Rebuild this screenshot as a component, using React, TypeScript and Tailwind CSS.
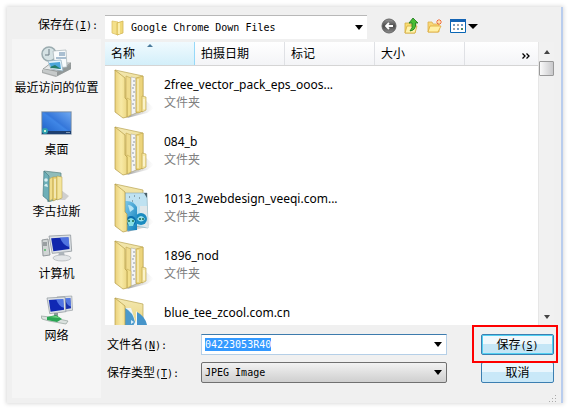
import { useEffect, useRef } from "react";
import type { ReactNode } from "react";

const mono = "font-['DejaVu_Sans_Mono','Noto_Sans_CJK_SC',monospace]";

function Caret() {
  return (
    <svg viewBox="0 0 8 5" className="h-[5px] w-2" aria-hidden="true">
      <path d="M0 0h8L4 5z" fill="#000" />
    </svg>
  );
}

function FolderShell({ children }: { children?: ReactNode }) {
  return (
    <svg viewBox="0 0 40 50" className="h-[50px] w-10 shrink-0" aria-hidden="true">
      <defs>
        <linearGradient id="cover" x1="0" x2="1">
          <stop offset="0" stopColor="#ead07a" />
          <stop offset="0.5" stopColor="#f8eaa6" />
          <stop offset="1" stopColor="#edd884" />
        </linearGradient>
        <linearGradient id="back" x1="0" x2="0" y1="0" y2="1">
          <stop offset="0" stopColor="#f3e8b0" />
          <stop offset="1" stopColor="#e3c765" />
        </linearGradient>
        <linearGradient id="shade" x1="0" x2="1">
          <stop offset="0" stopColor="#666" stopOpacity="0.65" />
          <stop offset="1" stopColor="#bbb" stopOpacity="0" />
        </linearGradient>
        <linearGradient id="aqua" x1="0" x2="1" y1="0" y2="1">
          <stop offset="0" stopColor="#7cc8ea" />
          <stop offset="1" stopColor="#0f7fbb" />
        </linearGradient>
      </defs>
      <path d="M29 29l11 10-7 5-20 5z" fill="url(#shade)" />
      <path d="M1 1l28 6v35l-14 4z" fill="url(#back)" stroke="#b9a350" strokeWidth="0.7" />
      {children}
      <path d="M1 1l10 8v20l2 2v17l-4 1-8-6z" fill="url(#cover)" stroke="#b39b48" strokeWidth="0.7" />
    </svg>
  );
}

function FullFolder() {
  return (
    <FolderShell>
      <path d="M12 7l5 2v37l-5 2z" fill="#efdb8c" stroke="#bfa651" strokeWidth="0.6" />
      <path d="M17 8l5 1v35l-5 2z" fill="#f4f5f6" stroke="#a9a694" strokeWidth="0.5" />
      <path d="M19 12h2m-2 4h2m-3 3h2m-1 4h2m-3 4h2m-1 4h2m-3 4h2m-1 4h2" stroke="#8f99a4" strokeWidth="1.2" />
      <path d="M22 9l7-2v35l-5 2-2-1z" fill="#ecd47c" stroke="#b99f45" strokeWidth="0.6" />
      <path d="M24 10v32" stroke="#faf0bd" strokeWidth="1.4" />
      <path d="M28 27l4 1v13l-4 2z" fill="#f7e9a6" stroke="#b99f45" strokeWidth="0.6" />
      <path d="M13 29l4 2v15l-4 2z" fill="#f2de88" stroke="#bfa64f" strokeWidth="0.5" />
      <path d="M30 30v10" stroke="#fffdf0" strokeWidth="1" />
    </FolderShell>
  );
}

function PictureFolder() {
  return (
    <FolderShell>
      <path d="M11 10l22 0 1 35-14-2-9 3z" fill="#bfe2f1" stroke="#86a9b6" strokeWidth="0.6" />
      <path d="M26 23h7l1 22-8-3z" fill="#e1e8ea" />
      <path d="M30 10l3 0v5z" fill="#4b606b" />
      <path d="M15 14h1m4-1h1m4 2h1m-8 3h1" stroke="#52666e" strokeWidth="1.2" />
      <circle cx="27" cy="36" r="6" fill="#1c8cc0" />
      <path d="M23 36q4-6 8 0-4 5-8 0" fill="#9ce0ed" />
      <circle cx="26" cy="36" r="1" fill="#1a6a48" />
      <circle cx="29" cy="36" r="1" fill="#1a6a48" />
      <path d="M11 18q8-1 12 6v23l-12 1z" fill="url(#aqua)" />
      <path d="M14 22q4 0 6 4l-4 3z" fill="#b5e4f5" />
      <circle cx="17" cy="38" r="5" fill="#0a6fae" />
      <path d="M13 38q4-6 8 0l-2 5h-4z" fill="#86dfe4" />
      <circle cx="15" cy="38" r="1" fill="#1a6a48" />
      <circle cx="19" cy="38" r="1" fill="#1a6a48" />
    </FolderShell>
  );
}

function BlueFolder() {
  return (
    <FolderShell>
      <path d="M22 14l11 12v19H22z" fill="#f5f7f8" />
      <path d="M23 15q8 4 10 13l-4 12h-6z" fill="#4694c9" />
      <path d="M11 11h6l5 15v20H11z" fill="#eef5f8" />
      <path d="M11 11q8 4 10 14-3 7-7 13h-3z" fill="#4c9acb" />
      <path d="M17 23l3 2-3 2z" fill="#d9edf8" />
    </FolderShell>
  );
}

function RecentIcon() {
  return (
    <svg viewBox="0 0 32 32" className="h-8 w-8" aria-hidden="true">
      <path d="M1 24l8-6 21-1v6l-15 8-14-4z" fill="#a8acac" />
      <path d="M2 23l8-6 20 0-14 8z" fill="#e6e8e8" stroke="#858b8b" strokeWidth="0.7" />
      <path d="M2 23l14 3v4L2 26z" fill="#c6caca" />
      <path d="M16 26l14-8v5l-14 7z" fill="#929898" />
      <circle cx="8" cy="8" r="7" fill="#d5e2e4" stroke="#9aabaf" strokeWidth="1.5" />
      <path d="M8 3v6H4" fill="none" stroke="#6c7c85" strokeWidth="1" />
      <path d="M12 5l13-1 1 17-12 1z" fill="#f8fbfc" stroke="#a3b0b5" strokeWidth="0.7" />
      <path d="M18 7h6m-6 2h6m-9 3h10" stroke="#5c83a6" strokeWidth="1.2" />
      <path d="M7 15l13-1 2 11-12-2z" fill="#eaf6fd" stroke="#8fadbe" strokeWidth="0.7" />
      <path d="M8 17l11-1 1 7-10-2z" fill="#4ba6db" />
      <path d="M9 21l5-2 6 4-10-1z" fill="#247c67" />
    </svg>
  );
}

function DesktopIcon() {
  return (
    <svg viewBox="0 0 32 32" className="h-8 w-8" aria-hidden="true">
      <defs>
        <linearGradient id="desk" x1="0" x2="1" y1="1" y2="0">
          <stop offset="0" stopColor="#1b5cc4" />
          <stop offset="0.5" stopColor="#3f86e6" />
          <stop offset="0.55" stopColor="#3577da" />
          <stop offset="1" stopColor="#6fa9f2" />
        </linearGradient>
      </defs>
      <path d="M0 3h31v24H0z" fill="#c3ccd4" />
      <path d="M1 4h29v22H1z" fill="url(#desk)" stroke="#71839a" strokeWidth="0.6" />
      <path d="M1 23h29v3H1z" fill="#1d3f70" />
      <circle cx="4" cy="23" r="3" fill="#2fa0ae" />
      <path d="M3 22h2v2H3z" fill="#caf0d8" />
      <path d="M25 24.500h4" stroke="#8095ae" strokeWidth="1" />
    </svg>
  );
}

function UserIcon() {
  return (
    <svg viewBox="0 0 32 32" className="h-8 w-8" aria-hidden="true">
      <path d="M20 20l8 6-4 4H9z" fill="#b6b6b6" opacity="0.6" />
      <path d="M3 1l17 2v25L7 32z" fill="#8fbcbb" stroke="#57817f" strokeWidth="0.7" />
      <path d="M8 9l4-2v22l-4 2z" fill="#f0dd8b" stroke="#b99e48" strokeWidth="0.5" />
      <path d="M12 7l4 0v22l-4 2z" fill="#eed77c" stroke="#ae923b" strokeWidth="0.5" />
      <path d="M16 6l5 1v21l-5 2z" fill="#f4e59c" stroke="#b79c45" strokeWidth="0.5" />
      <path d="M14 9v19" stroke="#f8f7e8" strokeWidth="1" />
      <path d="M3 1l5 5v25l-6-5z" fill="#6dafb8" stroke="#4b7c83" strokeWidth="0.7" />
      <circle cx="5" cy="10" r="1.8" fill="#d9eff1" />
      <path d="M3 16q3-5 4 1z" fill="#d9eff1" />
    </svg>
  );
}

function Screen({ blue }: { blue: string }) {
  return (
    <>
      <path d="M0 1l20-1 1 15-18 2z" fill="#dce1e5" stroke="#8b9298" strokeWidth="0.7" />
      <path d="M2 3l16-1 1 11-15 2z" fill={blue} />
      <path d="M10 2l8 0 1 9q-6-1-9-9z" fill="#658ef2" opacity="0.75" />
    </>
  );
}

function ComputerIcon() {
  return (
    <svg viewBox="0 0 32 32" className="h-8 w-8" aria-hidden="true">
      <path d="M1 8l6-1 2 16-7 1z" fill="#d1d5d5" stroke="#80878a" strokeWidth="0.8" />
      <path d="M2 11h4m-4 2h4" stroke="#62696f" />
      <circle cx="4" cy="18" r="1" fill="#54b767" />
      <g transform="translate(8 3) scale(1.08)">
        <Screen blue="#1026ac" />
      </g>
      <path d="M18 20l5 0 1 5h-7z" fill="#adb5bb" />
      <ellipse cx="21" cy="26" rx="9" ry="3" fill="#e3e6e8" stroke="#a1a7ac" strokeWidth="0.6" />
    </svg>
  );
}

function NetworkIcon() {
  return (
    <svg viewBox="0 0 32 32" className="h-8 w-8" aria-hidden="true">
      <g transform="translate(16 2) scale(.74 .95)">
        <Screen blue="#1930ad" />
      </g>
      <g transform="translate(6 3) scale(.9 .98)">
        <Screen blue="#1028b4" />
      </g>
      <path d="M15 19v5" stroke="#8c979c" strokeWidth="4" />
      <path d="M0 22l9 1 18 4-2 3-17-3-7-2z" fill="#dbe2df" stroke="#94a29c" strokeWidth="0.7" />
      <path d="M6 23l9-2 6 4-5 3-10-2z" fill="#2aa553" />
      <path d="M8 23l7-1 4 2z" fill="#78d486" />
    </svg>
  );
}

const places = [
  { name: "最近访问的位置", icon: <RecentIcon /> },
  { name: "桌面", icon: <DesktopIcon /> },
  { name: "李古拉斯", icon: <UserIcon /> },
  { name: "计算机", icon: <ComputerIcon /> },
  { name: "网络", icon: <NetworkIcon /> },
];

const files = [
  { name: "2free_vector_pack_eps_ooos...", kind: "文件夹", icon: <FullFolder /> },
  { name: "084_b", kind: "文件夹", icon: <FullFolder /> },
  { name: "1013_2webdesign_veeqi.com...", kind: "文件夹", icon: <PictureFolder /> },
  { name: "1896_nod", kind: "文件夹", icon: <FullFolder /> },
  { name: "blue_tee_zcool.com.cn", icon: <BlueFolder /> },
];

function Toolbar() {
  return (
    <div className="flex items-center gap-[7px] pb-[2px] pl-[14px]">
      <button type="button" aria-label="后退" className="w-4">
        <svg viewBox="0 0 16 16" className="size-4">
          <defs>
            <linearGradient id="ball" x1="0" x2="0" y1="0" y2="1">
              <stop offset="0" stopColor="#999" />
              <stop offset="0.5" stopColor="#4b4b4b" />
              <stop offset="1" stopColor="#8e8e8e" />
            </linearGradient>
          </defs>
          <circle cx="8" cy="8" r="7" fill="url(#ball)" stroke="#666" />
          <path d="M12 8H5m3-3L5 8l3 3" fill="none" stroke="#fff" strokeWidth="1.8" />
        </svg>
      </button>
      <button type="button" aria-label="向上一级" className="w-4">
        <svg viewBox="0 0 16 16" className="size-4">
          <path d="M1 5h4l1 1h6l-1 9H1z" fill="#f8dc72" stroke="#d3ad42" strokeWidth="0.8" />
          <path d="M1 15l2-7h10l-2 7z" fill="#fff3ad" stroke="#d5ab3c" strokeWidth="0.8" />
          <path d="M9 0l5 5h-2.500q1 7-5.500 8 3-3 2-8H5z" fill="#49bd35" stroke="#197619" strokeWidth="0.8" />
        </svg>
      </button>
      <button type="button" aria-label="新建文件夹" className="w-4">
        <svg viewBox="0 0 16 16" className="size-4">
          <path d="M1 4h4l1 2h6v8H1z" fill="#f8d778" stroke="#dcb04c" strokeWidth="0.8" />
          <path d="M1 14l2-6h11l-3 6z" fill="#fff0a5" stroke="#dda937" strokeWidth="0.8" />
          <path d="M12 1v6M9 4h6M10 2l4 4m0-4l-4 4" stroke="#f16935" />
          <circle cx="12" cy="4" r="1.3" fill="#ffe4a1" />
        </svg>
      </button>
      <button type="button" aria-label="查看" className="flex items-center gap-[2px]">
        <svg viewBox="0 0 16 14" className="h-[14px] w-4">
          <path d="M.5.5h15v13H.5z" fill="#fff" stroke="#0966b5" />
          <path d="M0 0h16v3H0z" fill="#1464b4" />
          <path d="M3 5h2v2H3zm8 0h2v2h-2zM7 9h2v2H7z" fill="#6f9bc4" />
          <path d="M7 5h2v2H7zM3 9h2v2H3z" fill="#a5a5a5" />
          <path d="M11 9h2v2h-2z" fill="#4a8460" />
        </svg>
        <svg viewBox="0 0 10 5" className="h-[5px] w-[10px]">
          <path d="M0 0h10L5 5z" />
        </svg>
      </button>
    </div>
  );
}

const columnClass =
  "w-[90px] shrink-0 border-r border-[#dfe1e5] bg-linear-to-b from-white to-[#f3f4f7] pl-[6px] text-left";

export default function App() {
  const nameRef = useRef<HTMLInputElement>(null);

  useEffect(() => {
    nameRef.current?.focus();
    nameRef.current?.select();
  }, []);

  return (
    <div className="h-screen overflow-hidden bg-white p-[7px] font-['Noto_Sans','Noto_Sans_CJK_SC',sans-serif] text-xs text-black">
      <main className="flex h-full flex-col border-r-2 border-[#b9cdee] bg-[#f0f0f0] shadow-[0_0_4px_1px_#dcdcdc]">
        <header className="flex h-8 shrink-0 pt-2">
          <label htmlFor="folder" className={`w-[98px] pr-[7px] text-right leading-5 ${mono}`}>
            保存在<span className="text-[10px]">(<u>I</u>):</span>
          </label>
          <div className="grid w-[262px] items-center border-t border-[#b8b8b8] bg-white *:col-start-1 *:row-start-1">
            <select
              id="folder"
              className={`h-full w-full appearance-none bg-transparent pl-[26px] text-[10px] outline-none ${mono}`}
            >
              <option>Google Chrome Down Files</option>
            </select>
            <svg viewBox="0 0 14 16" className="pointer-events-none ml-[6px] h-4 w-[14px]" aria-hidden="true">
              <path d="M1 1l6 1v13l-6-2z" fill="#f4e08a" stroke="#dcc268" strokeWidth="0.8" />
              <path d="M6 3l6-2v12l-6 2z" fill="#f0d978" stroke="#d3b656" strokeWidth="0.8" />
              <path d="M8 3v11" stroke="#fff5bf" strokeWidth="1.5" />
            </svg>
            <span className="pointer-events-none mr-1 justify-self-end">
              <Caret />
            </span>
          </div>
          <Toolbar />
        </header>

        <div className="flex min-h-0 flex-1">
          <nav className="mr-1 mb-[5px] ml-[5px] w-[89px] shrink-0 bg-[#f5f5f5] pt-[3px]">
            {places.map((place) => (
              <button key={place.name} type="button" className="flex h-[62px] w-full flex-col items-center pt-1">
                {place.icon}
                <span className="leading-5 whitespace-nowrap">{place.name}</span>
              </button>
            ))}
          </nav>

          <div className="flex min-w-0 flex-1 flex-col pt-[3px] pr-[7px] pb-5">
            <section className="flex min-h-0 flex-1 bg-white">
              <div className="flex min-w-0 flex-1 flex-col overflow-hidden">
                <div className="flex h-6 shrink-0 border-b border-[#d5d5d5]">
                  <button
                    type="button"
                    className="relative w-[90px] shrink-0 border-r border-[#96d9f9] bg-linear-to-b from-[#f0fafe] to-[#d3effa] pl-[6px] text-left"
                  >
                    名称
                    <svg viewBox="0 0 6 3" className="absolute top-[2px] left-[42px] h-[3px] w-[6px]" aria-hidden="true">
                      <path d="M0 3h6L3 0z" fill="#4a7a9b" />
                    </svg>
                  </button>
                  <button type="button" className={columnClass}>拍摄日期</button>
                  <button type="button" className={columnClass}>标记</button>
                  <button type="button" className={columnClass}>大小</button>
                  <button
                    type="button"
                    aria-label="更多列"
                    className="flex flex-1 items-center justify-end bg-linear-to-b from-white to-[#f3f4f7] pr-2"
                  >
                    <svg viewBox="0 0 8 6" className="mt-1 h-[6px] w-2">
                      <path d="M.5.5L3 3 .5 5.500M4.500.5L7 3 4.500 5.500" fill="none" stroke="#000" strokeWidth="1.3" />
                    </svg>
                  </button>
                </div>
                <ul className="min-h-0 flex-1 overflow-hidden pt-[3px]">
                  {files.map((file) => (
                    <li key={file.name} className="flex h-[57px] pl-[9px]">
                      {file.icon}
                      <div className="pt-[7px] pl-[10px]">
                        <p className="leading-[18px] whitespace-nowrap">{file.name}</p>
                        {file.kind && <p className="leading-[18px] text-[#808080]">{file.kind}</p>}
                      </div>
                    </li>
                  ))}
                </ul>
              </div>
              <div className="flex w-4 shrink-0 flex-col items-center border-l border-[#e6e6e6] bg-[#f1f1f1] pt-2 pb-[6px]">
                <svg viewBox="0 0 6 4" className="h-1 w-[6px]" aria-hidden="true">
                  <path d="M0 4h6L3 0z" fill="#444" />
                </svg>
                <div className="mt-[7px] h-[15px] w-full rounded-[1px] border border-[#999] bg-linear-to-r from-[#fafafa] to-[#c9c9cb]" />
                <svg viewBox="0 0 6 4" className="mt-auto h-1 w-[6px]" aria-hidden="true">
                  <path d="M0 0h6L3 4z" fill="#444" />
                </svg>
              </div>
            </section>

            <form className="flex flex-col gap-[7px] pt-[9px]" onSubmit={(event) => event.preventDefault()}>
              <div className="flex h-[21px] items-center">
                <label htmlFor="filename" className={`w-24 pl-[2px] ${mono}`}>
                  文件名<span className="text-[10px]">(<u>N</u>):</span>
                </label>
                <div className="flex h-full min-w-0 flex-1 items-center border border-[#b5cfe7] border-t-[#3d7bad] bg-white pr-1">
                  <input
                    id="filename"
                    ref={nameRef}
                    defaultValue="04223053R40"
                    className={`min-w-0 flex-1 bg-transparent pl-[3px] text-[10px] outline-none selection:bg-[#3399ff] selection:text-white ${mono}`}
                  />
                  <button type="button" aria-label="文件名列表">
                    <Caret />
                  </button>
                </div>
                <div className="relative ml-[34px] h-full w-[73px]">
                  <button
                    type="submit"
                    className={`h-full w-full rounded-[2px] border border-[#3c7fb1] bg-linear-to-b from-[#f0f8fc] from-50% to-[#c5e6f6] to-50% shadow-[inset_0_0_0_1px_#52d0f2] ${mono}`}
                  >
                    保存<span className="text-[10px]">(<u>S</u>)</span>
                  </button>
                  <div className="pointer-events-none absolute -top-[9px] -right-1 -bottom-2 -left-[9px] border-2 border-[#fe0000]" />
                </div>
              </div>
              <div className="flex h-[21px] items-center">
                <label htmlFor="filetype" className={`w-24 pl-[2px] ${mono}`}>
                  保存类型<span className="text-[10px]">(<u>T</u>):</span>
                </label>
                <div className="grid h-full min-w-0 flex-1 items-center rounded-[2px] border border-[#707070] bg-linear-to-b from-[#f2f2f2] to-[#cfcfcf] *:col-start-1 *:row-start-1">
                  <select
                    id="filetype"
                    className={`h-full w-full appearance-none bg-transparent pl-[3px] text-[10px] outline-none ${mono}`}
                  >
                    <option>JPEG Image</option>
                  </select>
                  <span className="pointer-events-none mr-1 justify-self-end">
                    <Caret />
                  </span>
                </div>
                <button
                  type="button"
                  className="ml-[34px] h-full w-[73px] rounded-[2px] border border-[#3c7fb1] bg-linear-to-b from-[#eaf6fd] from-50% to-[#c9e8f8] to-50%"
                >
                  取消
                </button>
              </div>
            </form>
          </div>
        </div>
        <svg viewBox="0 0 8 8" className="-mt-2 mr-1 size-2 shrink-0 self-end" aria-hidden="true">
          <path d="M6 0h1v1H6zM3 3h1v1H3zM6 3h1v1H6zM0 6h1v1H0zM3 6h1v1H3zM6 6h1v1H6z" fill="#aaa" />
        </svg>
      </main>
    </div>
  );
}
